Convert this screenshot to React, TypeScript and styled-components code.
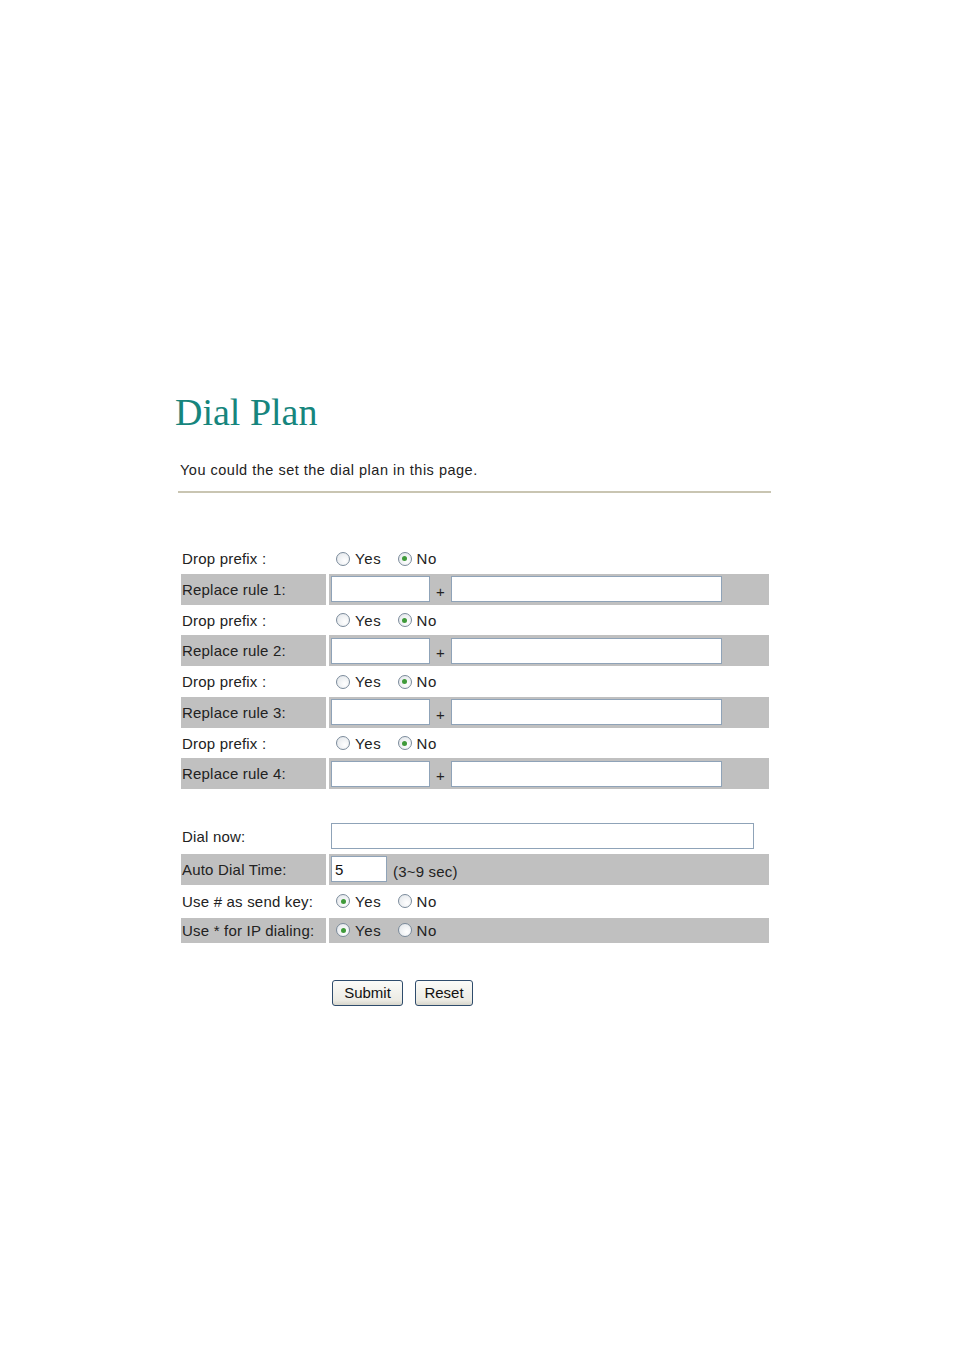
import React from "react";
import styled, { createGlobalStyle } from "styled-components";

const GlobalStyle = createGlobalStyle`
	html, body {
		margin: 0;
		padding: 0;
		background: #fff;
	}
	body {
		font-family: "Liberation Sans", Arial, sans-serif;
		color: #222;
	}
`;

const Page = styled.div`
	width: 954px;
	min-height: 1352px;
	padding: 388px 0 0 175px;
	box-sizing: border-box;
`;

const Title = styled.h1`
	margin: 0;
	font-family: "Liberation Serif", "Times New Roman", serif;
	font-weight: normal;
	font-size: 38px;
	line-height: 48px;
	color: #16857d;
`;

const Intro = styled.p`
	margin: 25px 0 0 5px;
	font-size: 14.5px;
	line-height: 18px;
	letter-spacing: 0.5px;
	color: #222;
`;

const Rule = styled.div`
	margin: 12px 0 0 3px;
	width: 593px;
	height: 2px;
	background: #c9c5b2;
`;

const Form = styled.div`
	margin: 51px 0 0 6px;
	width: 588px;
	display: flex;
	flex-direction: column;
`;

const Section = styled.div<{ $gap: number }>`
	display: flex;
	flex-direction: column;
	gap: ${(p) => p.$gap}px;
`;

const Row = styled.div<{ $h: number }>`
	display: flex;
	gap: 3px;
	height: ${(p) => p.$h}px;
	font-size: 15px;
	letter-spacing: 0.2px;
`;

const Label = styled.div<{ $shade?: boolean }>`
	width: 145px;
	flex-shrink: 0;
	display: flex;
	align-items: center;
	padding-left: 1px;
	box-sizing: border-box;
	white-space: nowrap;
	background: ${(p) => (p.$shade ? "#c0c0c0" : "transparent")};
	color: #222;
`;

const Value = styled.div<{ $shade?: boolean }>`
	flex: 1;
	display: flex;
	align-items: center;
	padding-left: 2px;
	background: ${(p) => (p.$shade ? "#c0c0c0" : "transparent")};
`;

const TextBox = styled.input<{ $w: number }>`
	width: ${(p) => p.$w}px;
	height: 26px;
	box-sizing: border-box;
	margin: 0;
	padding: 0 3px;
	border: 1px solid #8fa3b8;
	background: #fff;
	font-family: "Liberation Sans", Arial, sans-serif;
	font-size: 15px;
	color: #111;
	outline: none;
`;

const Plus = styled.span`
	width: 21px;
	text-align: center;
	font-size: 15px;
	padding-top: 4px;
	color: #222;
`;

const Hint = styled.span`
	margin-left: 6px;
	padding-top: 5px;
	font-size: 15px;
	color: #222;
`;

const Choice = styled.label`
	display: inline-flex;
	align-items: center;
	margin-left: 5px;
	margin-right: 11px;
	font-size: 15px;
	letter-spacing: 0.7px;
	color: #222;
	cursor: default;
`;

const RadioDot = styled.span<{ $on?: boolean }>`
	position: relative;
	width: 14px;
	height: 14px;
	box-sizing: border-box;
	border-radius: 50%;
	border: 1px solid #7b8b9b;
	background: radial-gradient(circle at 65% 65%, #ffffff 0%, #e9ecef 70%, #d4d9de 100%);
	margin-right: 5px;
	&::after {
		content: "";
		display: ${(p) => (p.$on ? "block" : "none")};
		position: absolute;
		left: 3.5px;
		top: 3.5px;
		width: 5px;
		height: 5px;
		border-radius: 50%;
		background: #3f9a3a;
	}
`;

const Spacer = styled.div`
	height: 32px;
`;

const Buttons = styled.div`
	display: flex;
	gap: 12px;
	margin: 37px 0 0 151px;
`;

const Button = styled.button<{ $w: number }>`
	width: ${(p) => p.$w}px;
	height: 26px;
	padding: 0;
	border: 1px solid #2f4c6c;
	border-radius: 3px;
	background: linear-gradient(#fbfbf8, #ecebe4 80%, #d8d6cc);
	font-family: "Liberation Sans", Arial, sans-serif;
	font-size: 15px;
	color: #111;
`;

const Radio = ({ on, text }: { on?: boolean; text: string }) => (
	<Choice>
		<RadioDot $on={on} />
		{text}
	</Choice>
);

const YesNo = ({ yes }: { yes: boolean }) => (
	<>
		<Radio on={yes} text="Yes" />
		<Radio on={!yes} text="No" />
	</>
);

const rules = [1, 2, 3, 4];

const App = () => {
	return (
		<Page>
			<GlobalStyle />
			<Title>Dial Plan</Title>
			<Intro>You could the set the dial plan in this page.</Intro>
			<Rule />
			<Form>
				<Section $gap={0.75}>
					{rules.map((n) => (
						<React.Fragment key={n}>
							<Row $h={29}>
								<Label>Drop prefix :</Label>
								<Value>
									<YesNo yes={false} />
								</Value>
							</Row>
							<Row $h={31}>
								<Label $shade>Replace rule {n}:</Label>
								<Value $shade>
									<TextBox $w={99} />
									<Plus>+</Plus>
									<TextBox $w={271} />
								</Value>
							</Row>
						</React.Fragment>
					))}
				</Section>
				<Spacer />
				<Section $gap={2.5}>
					<Row $h={30}>
						<Label>Dial now:</Label>
						<Value>
							<TextBox $w={423} />
						</Value>
					</Row>
					<Row $h={31}>
						<Label $shade>Auto Dial Time:</Label>
						<Value $shade>
							<TextBox $w={56} defaultValue="5" />
							<Hint>(3~9 sec)</Hint>
						</Value>
					</Row>
					<Row $h={28}>
						<Label>Use # as send key:</Label>
						<Value>
							<YesNo yes={true} />
						</Value>
					</Row>
					<Row $h={25}>
						<Label $shade>Use * for IP dialing:</Label>
						<Value $shade>
							<YesNo yes={true} />
						</Value>
					</Row>
				</Section>
				<Buttons>
					<Button $w={71}>Submit</Button>
					<Button $w={58}>Reset</Button>
				</Buttons>
			</Form>
		</Page>
	);
};

export default App;
